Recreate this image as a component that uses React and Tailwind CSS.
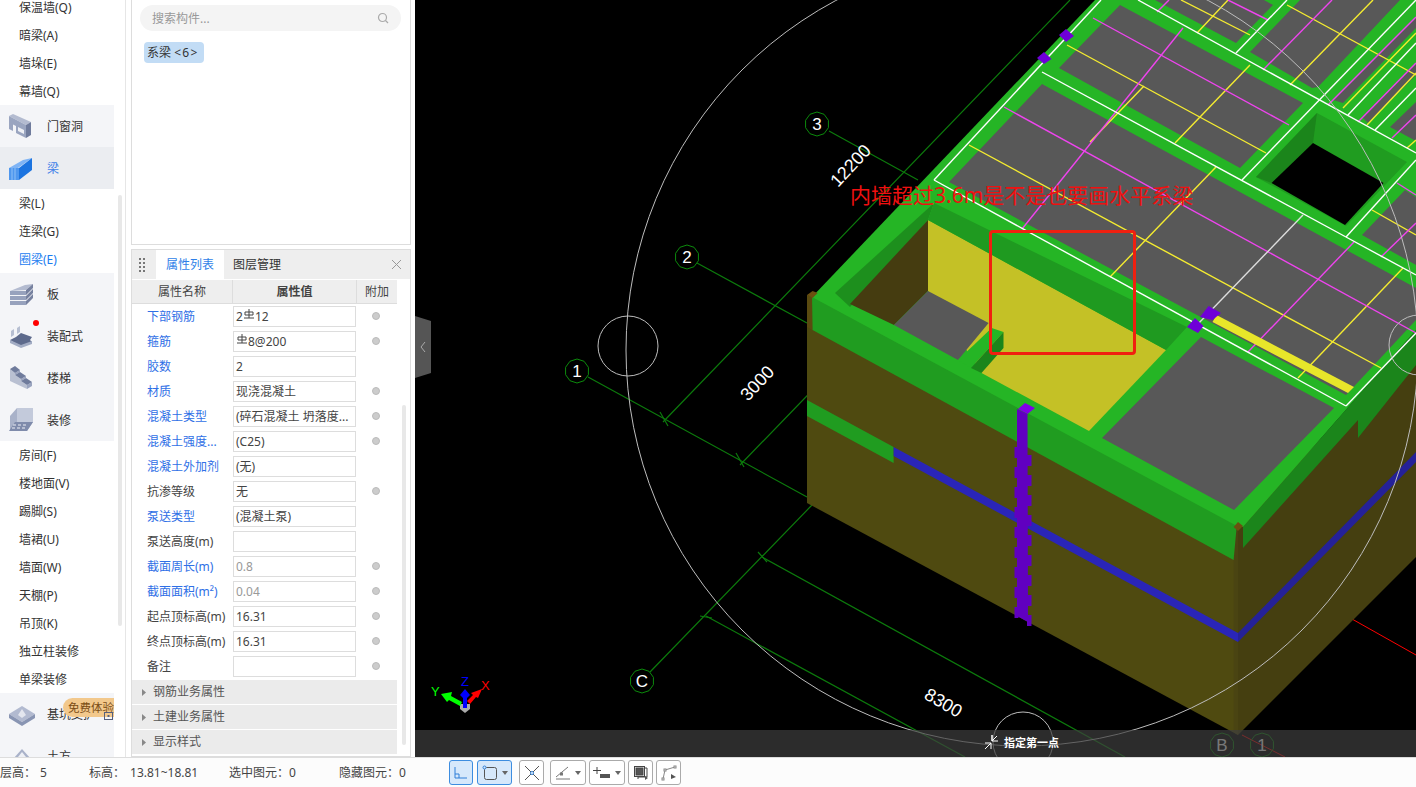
import React from "react";

const font = "font-['Noto_Sans','Noto_Sans_CJK_SC',sans-serif]";

function BoxIcon({ kind }) {
  // small isometric pictures of the nav entries
  if (kind === "door")
    return (
      <svg width="26" height="26" viewBox="0 0 26 26">
        <path d="M0 3l4-2 18 8-5 3z" fill="#b3bbd0" />
        <path d="M0 3l17 9v13L7 20v-7l-3-1.500V18l-4-2z" fill="#9aa5c0" />
        <path d="M17 12l5-3v13l-5 3z" fill="#6f7b9c" />
        <path d="M9 14l6 3v4l-6-3z" fill="#eef0f5" />
      </svg>
    );
  if (kind === "beam")
    return (
      <svg width="26" height="26" viewBox="0 0 26 26">
        <path d="M0 13l14-8 9-2-14 10z" fill="#7fb4f5" />
        <path d="M0 13h10v12H0z" fill="#4f97ee" />
        <path d="M10 13l13-10v12L10 25z" fill="#1c74e0" />
        <path d="M3 13v12M6 13v12" stroke="#8fc0f7" strokeWidth="1" />
      </svg>
    );
  if (kind === "slab")
    return (
      <svg width="26" height="26" viewBox="0 0 26 26">
        <path d="M1 10l16-1 7-6-8 1z" fill="#b3bbd0" />
        <path d="M1 10h16v4H1zM1 15h16v4H1zM1 20h16v4H1z" fill="#97a2bd" />
        <path d="M17 9l7-6v4l-7 7zM17 15l7-7v4l-7 7zM17 20l7-7v4l-7 7z" fill="#76819f" />
      </svg>
    );
  if (kind === "prefab")
    return (
      <svg width="26" height="26" viewBox="0 0 26 26">
        <path d="M1 17l6-3 5-4 11 4-2 3 2 2-11 5z" fill="#5d6a8c" />
        <path d="M1 17l11 5v3L1 20zM12 22l11-4v3l-11 4z" fill="#a2acc4" />
        <path d="M2 8l3-2v6l-3 2zM8 5l3-2v6L8 11z" fill="#b7bfd2" />
      </svg>
    );
  if (kind === "stair")
    return (
      <svg width="26" height="26" viewBox="0 0 26 26">
        <path d="M1 4l5 4v2l6 4v2l6 4v4L1 16z" fill="#b9c0d2" />
        <path d="M6 8l5-3v2l-5 3zM12 14l5-3v2l-5 3zM18 20l5-3v4l-5 3z" fill="#9aa4bf" />
        <path d="M1 4l5-3 5 4-5 3zM6 10l5-3 6 4-5 3zM12 16l5-3 6 4-5 3z" fill="#6f7b9c" />
      </svg>
    );
  if (kind === "finish")
    return (
      <svg width="26" height="26" viewBox="0 0 26 26">
        <path d="M8 1h16v14H8z" fill="#c3cadb" />
        <path d="M8 1L1 9v15h17l6-9H8z" fill="#a9b2c9" />
        <path d="M6 15h18l-6 9H0z" fill="#7f8bab" />
        <path d="M4 18h3M9 18h3M14 18h3M3 21h3M8 21h3M13 21h3" stroke="#eef0f5" strokeWidth="1.2" />
      </svg>
    );
  if (kind === "found")
    return (
      <svg width="26" height="26" viewBox="0 0 26 26">
        <path d="M0 13L13 5l13 8-13 8z" fill="#b2bad0" />
        <path d="M0 13l13 8v4L0 17zM13 21l13-8v4l-13 8z" fill="#8995b3" />
        <path d="M9 14l4-6 4 6-4 3z" fill="#e3e6ee" />
      </svg>
    );
  return (
    <svg width="26" height="26" viewBox="0 0 26 26">
      <path d="M4 16L13 6l9 10-9 6z" fill="#a9b2c9" />
      <path d="M9 14l4-5 4 5z" fill="#eef0f5" />
    </svg>
  );
}

function SubItem({ label, active }) {
  return (
    <div className={`h-7 pl-[19px] pt-[2px] flex items-center text-xs ${active ? "text-[#1a7cf0]" : "text-[#333]"}`}>
      {label}
    </div>
  );
}

function GroupItem({ kind, label, active, selected }) {
  return (
    <div className={`h-[42px] flex items-center pl-[9px] ${selected ? "bg-[#ebedf1]" : "bg-[#f4f5f8]"}`}>
      <BoxIcon kind={kind} />
      <span className={`ml-3 pt-[2px] text-xs ${active ? "text-[#3f7fe8]" : "text-[#333]"}`}>{label}</span>
    </div>
  );
}

function SideNav() {
  return (
    <div className="relative w-[131px] h-full overflow-hidden bg-white">
      <div className="w-[114px] -mt-[7px]">
        <SubItem label="保温墙(Q)" />
        <SubItem label="暗梁(A)" />
        <SubItem label="墙垛(E)" />
        <SubItem label="幕墙(Q)" />
        <GroupItem kind="door" label="门窗洞" />
        <GroupItem kind="beam" label="梁" active selected />
        <SubItem label="梁(L)" />
        <SubItem label="连梁(G)" />
        <SubItem label="圈梁(E)" active />
        <GroupItem kind="slab" label="板" />
        <GroupItem kind="prefab" label="装配式" />
        <GroupItem kind="stair" label="楼梯" />
        <GroupItem kind="finish" label="装修" />
        <SubItem label="房间(F)" />
        <SubItem label="楼地面(V)" />
        <SubItem label="踢脚(S)" />
        <SubItem label="墙裙(U)" />
        <SubItem label="墙面(W)" />
        <SubItem label="天棚(P)" />
        <SubItem label="吊顶(K)" />
        <SubItem label="独立柱装修" />
        <SubItem label="单梁装修" />
        <GroupItem kind="found" label="基坑支护" />
        <GroupItem kind="earth" label="土方" />
      </div>
      {/* scrollbar, red dot, trial badge */}
      <div className="absolute left-[118px] top-[195px] w-1 h-[431px] rounded bg-[#e8e8e8]" />
      <div className="absolute left-[125px] top-0 w-px h-full bg-[#e6e6e6]" />
      <div className="absolute left-[33px] top-[320px] w-1.5 h-1.5 rounded-full bg-[#f00]" />
      <div className="absolute left-[63px] top-[698px] w-[51px] h-[19px] rounded-l-full bg-[#f2c88c] text-[11.5px] leading-[19px] pl-[5px] text-[#7a4c14] overflow-hidden whitespace-nowrap">
        免费体验
      </div>
      <svg className="absolute left-[104px] top-[710px]" width="9" height="10" viewBox="0 0 9 10">
        <rect x="0.5" y="2.5" width="8" height="7" fill="none" stroke="#56607e" />
        <rect x="3.5" y="5" width="2" height="2" fill="#56607e" />
      </svg>
    </div>
  );
}

function Rebar() {
  return (
    <svg width="10" height="10" viewBox="0 0 10 10" className="inline-block align-[2px] mx-px">
      <path d="M5 0v9M1 3h8v3H1zM0 9h10" fill="none" stroke="#444" strokeWidth="1" />
    </svg>
  );
}

const rows = [
  { name: "下部钢筋", blue: true, value: <>2<Rebar />12</>, dot: true },
  { name: "箍筋", blue: true, value: <><Rebar />8@200</>, dot: true },
  { name: "胶数", blue: true, value: "2" },
  { name: "材质", blue: true, value: "现浇混凝土", dot: true },
  { name: "混凝土类型", blue: true, value: "(碎石混凝土 坍落度...", dot: true },
  { name: "混凝土强度...", blue: true, value: "(C25)", dot: true },
  { name: "混凝土外加剂", blue: true, value: "(无)" },
  { name: "抗渗等级", value: "无", dot: true },
  { name: "泵送类型", blue: true, value: "(混凝土泵)" },
  { name: "泵送高度(m)", value: "" },
  { name: "截面周长(m)", blue: true, value: "0.8", muted: true, dot: true },
  { name: "截面面积(m²)", blue: true, value: "0.04", muted: true, dot: true },
  { name: "起点顶标高(m)", value: "16.31", dot: true },
  { name: "终点顶标高(m)", value: "16.31", dot: true },
  { name: "备注", value: "", dot: true },
];

function PropRow({ row }) {
  return (
    <div className="h-[25px] flex items-center text-xs">
      <div className={`w-[101px] pl-[15px] whitespace-nowrap ${row.blue ? "text-[#2f6fe6]" : "text-[#444]"}`}>
        {row.name}
      </div>
      <div className={`w-[123px] h-[21px] border border-[#ddd] px-[2px] leading-[19px] whitespace-nowrap overflow-hidden ${row.muted ? "text-[#999]" : "text-[#444]"}`}>
        {row.value}
      </div>
      <div className="w-10 flex justify-center pb-px">
        {row.dot && <div className="w-2 h-2 rounded-full bg-[#ccc] border border-[#bbb]" />}
      </div>
    </div>
  );
}

function Section({ label }) {
  return (
    <div className="h-6 mb-px bg-[#ebebeb] flex items-center text-xs text-[#555] pl-[10px]">
      <svg width="4" height="7" viewBox="0 0 4 7" className="mr-[7px]">
        <path d="M0 0l4 3.500-4 3.500z" fill="#888" />
      </svg>
      {label}
    </div>
  );
}

function PropsPanel() {
  return (
    <div className="w-[284px] h-full pr-1 flex flex-col gap-1 bg-white">
      <div className="h-[245px] border border-t-0 border-[#ddd] bg-white pl-2 pt-[5px]">
        <div className="w-[261px] h-[26px] rounded-full bg-[#f4f4f4] flex items-center justify-between pl-3 pr-3 text-xs text-[#999]">
          <span className="pt-[2px]">搜索构件...</span>
          <svg width="12" height="12" viewBox="0 0 12 12" fill="none" stroke="#aaa" strokeWidth="1.2">
            <circle cx="5.500" cy="5.500" r="4" />
            <path d="M8.500 8.500L11 11" />
          </svg>
        </div>
        <div className="mt-[11px] ml-1 w-[60px] h-[21px] rounded bg-[#c2dcf5] text-xs leading-[21px] pl-[3px] text-[#333] whitespace-nowrap">
          系梁&nbsp;<span className="tracking-[1.3px]">&lt;6&gt;</span>
        </div>
      </div>
      <div className="relative flex-1 border border-[#ddd] bg-white">
        <div className="h-[29px] bg-[#eeeeee] flex items-stretch text-xs">
          <svg width="24" height="29" viewBox="0 0 24 29" className="shrink-0">
            <path d="M7 8h2v2H7zM11 8h2v2h-2zM7 12h2v2H7zM11 12h2v2h-2zM7 16h2v2H7zM11 16h2v2h-2zM7 20h2v2H7zM11 20h2v2h-2z" fill="#777" />
          </svg>
          <div className="w-[68px] bg-white text-[#2f7fe8] flex items-center justify-center">属性列表</div>
          <div className="ml-[9px] flex items-center text-[#333]">图层管理</div>
          <svg width="9" height="9" viewBox="0 0 9 9" className="ml-auto mr-[9px] self-center" stroke="#999" strokeWidth="1">
            <path d="M0 0l9 9M9 0L0 9" />
          </svg>
        </div>
        <div className="w-[265px] h-[24px] mt-px bg-[#eeeeee] border-b border-[#ddd] flex text-xs text-[#444]">
          <div className="w-[101px] flex items-center justify-center border-r border-[#ddd]">属性名称</div>
          <div className="w-[124px] flex items-center justify-center border-r border-[#ddd] font-bold">属性值</div>
          <div className="flex-1 flex items-center justify-center">附加</div>
        </div>
        <div className="w-[265px]">
          {rows.map((row) => (
            <PropRow key={row.name} row={row} />
          ))}
          <div className="h-[1px]" />
          <Section label="钢筋业务属性" />
          <Section label="土建业务属性" />
          <Section label="显示样式" />
        </div>
        <div className="absolute left-[270px] top-[155px] w-1 h-[340px] rounded bg-[#e8e8e8]" />
      </div>
    </div>
  );
}

function Bubble({ x, y, label, dim }) {
  const pts = Array.from({ length: 10 }, (_, i) => {
    const a = (Math.PI * 2 * i) / 10 + Math.PI / 10;
    return `${x + 12 * Math.cos(a)},${y + 12 * Math.sin(a)}`;
  }).join(" ");
  return (
    <g>
      <polygon points={pts} fill={dim ? "none" : "#000"} stroke="#0c8a0c" strokeWidth="1" />
      <text x={x} y={y + 6} textAnchor="middle" fontSize="17" fill="#fff" fontFamily="Liberation Sans">
        {label}
      </text>
    </g>
  );
}

const yellowLines = [
  [969, 145, 1381, 368], [1067, 45, 1266, 153], [1110, 277, 1216, 167], [1090, 142, 1144, 86],
  [1175, 143, 1250, 65], [1197, 33, 1228, 0], [1290, 85, 1373, 0], [1181, 0, 1250, 35],
  [1287, 5, 1416, 75], [1298, 378, 1403, 268], [1372, 210, 1416, 235], [1343, 108, 1416, 33],
  [1367, 125, 1416, 73], [1407, 148, 1416, 140],
];
const magentaLines = [
  [1022, 229, 1183, 28], [1004, 107, 1416, 333], [1093, 18, 1289, 125], [1248, 352, 1354, 242],
  [1263, 70, 1332, 0], [1157, 12, 1169, 0], [1228, 0, 1268, 20], [1381, 257, 1416, 223],
  [1397, 183, 1416, 195], [1328, 105, 1416, 17], [1358, 122, 1416, 63], [1392, 138, 1416, 115],
];
const whiteLines = [
  [934, 180, 1101, 0], [934, 180, 1346, 406], [1346, 406, 1416, 333], [1042, 72, 1346, 237],
  [1346, 237, 1416, 275], [1138, 0, 1416, 153], [1236, 53, 1287, 0], [1242, 180, 1416, 0],
  [1346, 237, 1416, 160], [1348, 115, 1416, 43], [1375, 130, 1416, 88],
];

function Viewport() {
  const steps = Array.from({ length: 9 }, (_, i) => i);
  return (
    <div className="relative flex-1 h-full bg-black overflow-hidden">
      <svg className="block w-full h-full" viewBox="415 0 1001 757">
        {/* axis lines */}
        <g stroke="#0c7a0c" strokeWidth="1.2" fill="none">
          <path d="M829 131L918 180M697 263L807 323M588 377L807 497" />
          <path d="M663 422L1070 0M740 465L830 372M650 672L812 505" />
          <path d="M762 557L1125 757M706 616L965 757" />
          <path d="M660 412l8 14M736 453l8 14M758 552l9 10M700 616l12 2" />
        </g>
        <path d="M1352 619L1416 655M1242 735L1285 757" stroke="#f00" strokeWidth="1" />

        {/* building faces */}
        <polygon points="807,295 1238,531 1238,735 807,503" fill="#4f4a10" />
        <polygon points="1238,525 1416,340 1416,557 1238,735" fill="#453f10" />
        <polygon points="807,295 812.600,297 812.600,330 807,327" fill="#5a4a10" />
        <polygon points="1233.600,525 1238,528 1238,735 1233.600,732" fill="#4a4412" />
        <polygon points="807,400 893.600,447 893.600,463 807,416" fill="#209c20" />
        <polygon points="893.600,447 1238,633 1238,642 893.600,456" fill="#2a25b8" />
        <polygon points="1238,633 1416,452 1416,462 1238,642" fill="#252198" />
        <polygon points="812,295 1237,523 1233.600,560 812.600,330" fill="#209c20" />
        <polygon points="1243,527 1372,380 1416,330 1416,365 1358,438 1358,420 1243,548" fill="#1b851b" />

        {/* top surface */}
        <polygon points="812,297 1095,0 1416,0 1416,330 1243,527 1237,526" fill="#25b525" />
        <polygon points="949,182 1042,84 1416,288 1416,320 1346,395" fill="#585858" />
        <polygon points="1059,68 1120,5 1303,103 1240,168" fill="#585858" />
        <polygon points="1155,0 1236,43 1273,5 1264,0" fill="#585858" />
        <polygon points="1250,52 1300,0 1400,0 1318,87 1312,88" fill="#585858" />
        <polygon points="1362,235 1405,190 1416,197 1416,265" fill="#585858" />
        <polygon points="1390,127 1416,102 1416,141" fill="#585858" />
        <polygon points="1333,100 1416,17 1416,28 1343,103" fill="#585858" />
        <polygon points="1362,117 1416,63 1416,75 1368,123" fill="#585858" />
        <polygon points="1201,337 1334,408 1234,510 1102,438" fill="#585858" />

        {/* stair hole */}
        <polygon points="1317,113 1256,177 1346,226 1407,162" fill="#209c20" />
        <polygon points="1317,113 1256,177 1271.500,183 1313,143" fill="#1b851b" />
        <polygon points="1313,143 1271.500,183 1345,225 1383.500,183" fill="#000" />

        {/* room below the slab */}
        <polygon points="835,293 934,203 928,220 850,307" fill="#1d8f1d" />
        <polygon points="850,304 928,220 928,291 894,325" fill="#453c10" />
        <polygon points="928,220 1166,350 1089,431 981.500,373 928,291" fill="#c4c126" />
        <polygon points="934,203 1187,327 1166,350 928,220" fill="#1f9a20" />
        <polygon points="928,291 988.600,323 958,360 894,325" fill="#585858" />
        <polygon points="958,360 991.700,328 1003.500,332 971,368" fill="#25b525" />
        <polygon points="1003.500,332 1003.500,348 981.500,373 971,368" fill="#1b851b" />

        {/* rebar and beam lines */}
        {yellowLines.map((l, i) => (
          <line key={i} x1={l[0]} y1={l[1]} x2={l[2]} y2={l[3]} stroke="#f5ec30" strokeWidth="1.4" />
        ))}
        {magentaLines.map((l, i) => (
          <line key={i} x1={l[0]} y1={l[1]} x2={l[2]} y2={l[3]} stroke="#ee44ee" strokeWidth="1.4" />
        ))}
        {whiteLines.map((l, i) => (
          <line key={i} x1={l[0]} y1={l[1]} x2={l[2]} y2={l[3]} stroke="#fff" strokeWidth="1.4" />
        ))}
        <line x1="1197" y1="325" x2="1303" y2="215" stroke="#ddd" strokeWidth="1.4" />
        <polygon points="1216.500,315 1354,387 1348,393 1212.500,322" fill="#e8e62a" />

        {/* purple columns */}
        <g fill="#6f00d8">
          <polygon points="1059,35 1066,29 1074,36 1066,42" />
          <polygon points="1037,58 1044,52 1051.500,59 1044,64" />
          <polygon points="1200,317 1208.600,306 1221,313 1212.500,320" />
          <polygon points="1187,327 1195,318 1203.500,326 1198,333" />
          <polygon points="1025,403 1035,408 1027.500,414 1018,409" fill="#7f00e8" />
        </g>
        <polygon points="1017,409 1027.500,414 1028,622 1017,616" fill="#6000c0" />
        {steps.map((i) => (
          <g key={i} fill="#6000c0">
            <rect x="1014.500" y={447 + i * 20} width="4" height="11" />
            <rect x="1027" y={455 + i * 20} width="4.500" height="11" />
          </g>
        ))}
        <polygon points="807,295 812.600,291 817.700,293 812.600,298" fill="#6b5010" />
        <polygon points="1233.600,527 1238,522 1243,526 1238,531" fill="#6b5010" />

        {/* snapping circles */}
        <g fill="none" stroke="#bdbdbd" strokeWidth="1">
          <circle cx="1022" cy="350" r="396" />
          <circle cx="628" cy="346" r="30" />
          <circle cx="1023" cy="742" r="30" />
          <circle cx="1419" cy="345" r="30" />
        </g>

        <Bubble x={817} y={124} label="3" />
        <Bubble x={687} y={257} label="2" />
        <Bubble x={577} y={371} label="1" />
        <Bubble x={642} y={681} label="C" />
        <Bubble x={1222} y={745} label="B" dim />
        <Bubble x={1262} y={745} label="1" dim />

        <g fill="#fff" fontSize="18" fontFamily="Liberation Sans">
          <text transform="translate(838 188) rotate(-47)">12200</text>
          <text transform="translate(748 402) rotate(-47)">3000</text>
          <text transform="translate(923 698) rotate(30)">8300</text>
        </g>

        {/* collapse handle */}
        <polygon points="415,316 431,321 431,373 415,378" fill="#555" />
        <path d="M425 342l-4 5 4 5" fill="none" stroke="#aaa" strokeWidth="1" />

        {/* xyz gizmo */}
        <polygon points="460,704 470,704 470,709 465,713 460,709" fill="#aaa" />
        <polygon points="441,694 452,692 451,696 462,702 460,706 449,700 447,702" fill="#0f0" />
        <polygon points="482,689 478,698 476,697 470,704 467,701 473,695 471,693" fill="#f00" />
        <polygon points="465,689 470,695 467,698 467,708 463,708 463,698 460,695" fill="#00f" />
        <g fontSize="13" fontFamily="Liberation Sans">
          <text x="431" y="696" fill="#0f0">Y</text>
          <text x="461" y="686" fill="#00f">Z</text>
          <text x="481" y="690" fill="#f00">X</text>
        </g>
      </svg>

      {/* annotation drawn on top of the screenshot */}
      <div className="absolute left-[435px] top-[180px] text-[21px] leading-[30px] text-[#f01010] whitespace-nowrap">
        内墙超过3.6m是不是也要画水平系梁
      </div>
      <div className="absolute left-[574px] top-[230px] w-[147px] h-[125px] border-[3px] border-[#f02010] rounded-sm" />

      {/* command prompt bar */}
      <div className="absolute left-0 bottom-0 w-full h-[27px] bg-[#3f3f3f]/70">
        <svg className="absolute left-[569px] top-[4px]" width="16" height="16" viewBox="0 0 16 16" fill="none" stroke="#fff" strokeWidth="1">
          <path d="M8 1v6h6M8 1v6M8 7l5-5M1 15l6-6M1 9h6v6" />
        </svg>
        <span className="absolute left-[589px] top-[5px] text-[11px] leading-4 font-bold text-white whitespace-nowrap">指定第一点</span>
      </div>
    </div>
  );
}

function ToolBtn({ active, wide, children }) {
  return (
    <div className={`h-[25px] ${wide} rounded-[3px] border flex items-center justify-center ${active ? "bg-[#d6e8fb] border-[#3d8de0]" : "bg-white border-[#aaa]"}`}>
      {children}
    </div>
  );
}

function Caret() {
  return (
    <svg width="6" height="4" viewBox="0 0 6 4" className="ml-1">
      <path d="M0 0h6L3 4z" fill="#666" />
    </svg>
  );
}

function StatusBar() {
  return (
    <div className="relative h-[30px] bg-[#fcfcfc] border-t border-[#ddd] flex items-center text-xs text-[#444] whitespace-nowrap">
      <span className="w-[89px]">层高：<span className="ml-1">5</span></span>
      <span className="w-[140px]">标高：<span className="ml-[5px]">13.81~18.81</span></span>
      <span className="w-[110px]">选中图元：0</span>
      <span className="w-[110px]">隐藏图元：0</span>
      <div className="flex">
        <ToolBtn active wide="w-6">
          <svg width="14" height="14" viewBox="0 0 14 14" fill="none" stroke="#2f7fd8" strokeWidth="1">
            <path d="M1 1v11h12M1 8h4v4" />
          </svg>
        </ToolBtn>
        <div className="w-1" />
        <ToolBtn active wide="w-[35px]">
          <svg width="16" height="16" viewBox="0 0 16 16" fill="none" stroke="#555" strokeWidth="1">
            <rect x="2.500" y="2.500" width="12" height="12" rx="2" />
            <circle cx="2.500" cy="2.500" r="1.500" fill="#d6e8fb" stroke="#2f7fd8" />
          </svg>
          <Caret />
        </ToolBtn>
        <div className="w-[7px]" />
        <ToolBtn wide="w-[25px]">
          <svg width="16" height="16" viewBox="0 0 16 16" fill="none" stroke="#555" strokeWidth="1">
            <path d="M1 1l14 14M15 1L1 15" />
            <circle cx="8" cy="8" r="1.500" fill="#fff" stroke="#2f7fd8" />
          </svg>
        </ToolBtn>
        <div className="w-[6px]" />
        <ToolBtn wide="w-9">
          <svg width="16" height="14" viewBox="0 0 16 14" fill="none" stroke="#777" strokeWidth="1">
            <path d="M1 11L13 1" />
            <path d="M1 13h14" stroke="#bbb" strokeWidth="2" />
            <rect x="5.500" y="7" width="2" height="2" fill="#fff" />
          </svg>
          <Caret />
        </ToolBtn>
        <div className="w-[3px]" />
        <ToolBtn wide="w-9">
          <svg width="18" height="14" viewBox="0 0 18 14" fill="none">
            <path d="M4 1v7M0 4.500h8" stroke="#444" strokeWidth="1" />
            <rect x="7" y="8" width="10" height="4" fill="#555" />
          </svg>
          <Caret />
        </ToolBtn>
        <div className="w-[3px]" />
        <ToolBtn wide="w-[25px]">
          <svg width="16" height="16" viewBox="0 0 16 16" fill="none" stroke="#444" strokeWidth="1">
            <rect x="1.500" y="1.500" width="10" height="10" />
            <rect x="3" y="3" width="7" height="7" fill="#555" />
            <path d="M12 3h2v9H5v2" />
            <path d="M12 11l3 2-3 2z" fill="#555" stroke="none" />
          </svg>
        </ToolBtn>
        <div className="w-[3px]" />
        <ToolBtn wide="w-[25px]">
          <svg width="16" height="16" viewBox="0 0 16 16" fill="none" stroke="#888" strokeWidth="1">
            <path d="M2 14l2-9 10-3" />
            <rect x="1" y="13" width="2" height="2" fill="#fff" />
            <rect x="3" y="4" width="2" height="2" fill="#fff" />
            <rect x="13" y="1" width="2" height="2" fill="#fff" />
            <path d="M10 9l5 3-5 2z" fill="#555" stroke="none" />
          </svg>
        </ToolBtn>
      </div>
    </div>
  );
}

export default function App() {
  return (
    <div className={`w-[1416px] h-[787px] overflow-hidden flex flex-col ${font}`}>
      <div className="h-[757px] flex">
        <SideNav />
        <PropsPanel />
        <Viewport />
      </div>
      <StatusBar />
    </div>
  );
}
